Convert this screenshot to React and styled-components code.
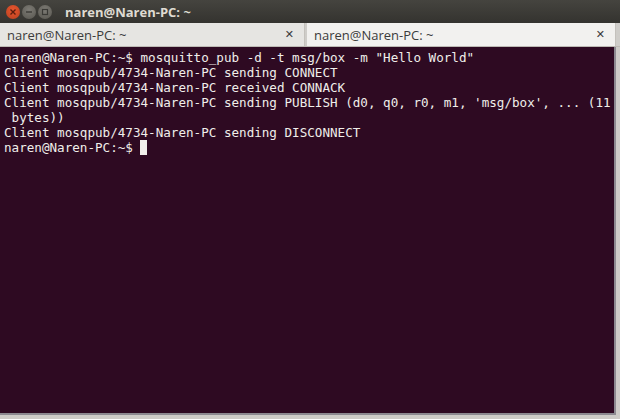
import React from "react";
import styled, { createGlobalStyle } from "styled-components";

const GlobalStyle = createGlobalStyle`
  html, body {
    margin: 0;
    padding: 0;
    background: #d6d4d0;
    overflow: hidden;
  }
`;

const lines = [
  'naren@Naren-PC:~$ mosquitto_pub -d -t msg/box -m "Hello World"',
  "Client mosqpub/4734-Naren-PC sending CONNECT",
  "Client mosqpub/4734-Naren-PC received CONNACK",
  "Client mosqpub/4734-Naren-PC sending PUBLISH (d0, q0, r0, m1, 'msg/box', ... (11",
  " bytes))",
  "Client mosqpub/4734-Naren-PC sending DISCONNECT",
];

const App = () => {
  return (
    <>
      <GlobalStyle />
      <Window>
        <TitleBar>
          <Controls>
            <WinButton $color="#e8562f" $edge="#b8401f">
              <svg width="8" height="8" viewBox="0 0 8 8">
                <path d="M1.5 1.5 L6.5 6.5 M6.5 1.5 L1.5 6.5" stroke="#5a1d0e" strokeWidth="1.4" />
              </svg>
            </WinButton>
            <WinButton $color="#7d7b75" $edge="#58564f">
              <svg width="8" height="8" viewBox="0 0 8 8">
                <path d="M1 4 H7" stroke="#3b3a36" strokeWidth="1.4" />
              </svg>
            </WinButton>
            <WinButton $color="#7d7b75" $edge="#58564f">
              <svg width="8" height="8" viewBox="0 0 8 8">
                <rect x="1.5" y="1.5" width="5" height="5" fill="none" stroke="#3b3a36" strokeWidth="1.2" />
              </svg>
            </WinButton>
          </Controls>
          <Title>naren@Naren-PC: ~</Title>
        </TitleBar>
        <TabBar>
          <Tab>
            <TabLabel>naren@Naren-PC: ~</TabLabel>
            <TabClose>✕</TabClose>
          </Tab>
          <Tab $active>
            <TabLabel>naren@Naren-PC: ~</TabLabel>
            <TabClose>✕</TabClose>
          </Tab>
        </TabBar>
        <TerminalFrame>
          <Terminal>
            {lines.map((line, i) => (
              <Line key={i}>{line}</Line>
            ))}
            <Line>
              naren@Naren-PC:~$ <Cursor />
            </Line>
          </Terminal>
        </TerminalFrame>
      </Window>
    </>
  );
};

export default App;

const Window = styled.div`
  width: 620px;
  height: 419px;
  display: flex;
  flex-direction: column;
  background: #d9d7d3;
`;

const TitleBar = styled.div`
  height: 23px;
  display: flex;
  align-items: center;
  padding-left: 6px;
  background: linear-gradient(#45443f, #34332f);
  box-sizing: border-box;
`;

const Controls = styled.div`
  display: flex;
  gap: 2px;
  align-items: center;
`;

const WinButton = styled.div`
  width: 14px;
  height: 14px;
  border-radius: 50%;
  background: radial-gradient(circle at 50% 35%, ${(p) => p.$color}, ${(p) => p.$edge});
  display: flex;
  align-items: center;
  justify-content: center;
`;

const Title = styled.div`
  margin-left: 13px;
  font-family: "Open Sans", "DejaVu Sans", sans-serif;
  font-weight: 700;
  font-size: 13px;
  color: #dfdbd2;
`;

const TabBar = styled.div`
  height: 23px;
  display: grid;
  grid-template-columns: 305px 1fr;
  gap: 2px;
  padding-right: 4px;
  background: #cfcdc9;
  border-bottom: 1px solid #bdbab4;
`;

const Tab = styled.div`
  display: flex;
  align-items: center;
  justify-content: space-between;
  padding: 0 10px 0 ${(p) => (p.$active ? "7px" : "7px")};
  background: ${(p) => (p.$active ? "#f2f1ef" : "#e6e5e2")};
  border-right: 1px solid #c4c1bc;
`;

const TabLabel = styled.span`
  font-family: "Open Sans", "DejaVu Sans", sans-serif;
  font-size: 13px;
  color: #3c3c3c;
`;

const TabClose = styled.span`
  font-family: "DejaVu Sans", sans-serif;
  font-size: 11px;
  font-weight: 700;
  color: #3a3a3a;
`;

const TerminalFrame = styled.div`
  flex: 1;
  padding: 0 4px 4px 0;
  background: #cdcbc7;
  display: flex;
`;

const Terminal = styled.div`
  flex: 1;
  background: #2e0a22;
  padding: 3px 0 0 4px;
  border-right: 2px solid #8c8990;
  border-bottom: 2px solid #8c8990;
  font-family: "DejaVu Sans Mono", monospace;
  font-size: 12.6px;
  line-height: 15px;
  color: #f0eeea;
  white-space: pre;
  overflow: hidden;
`;

const Line = styled.div`
  height: 15px;
`;

const Cursor = styled.span`
  display: inline-block;
  width: 7px;
  height: 15px;
  background: #f2f0ec;
  vertical-align: top;
`;
